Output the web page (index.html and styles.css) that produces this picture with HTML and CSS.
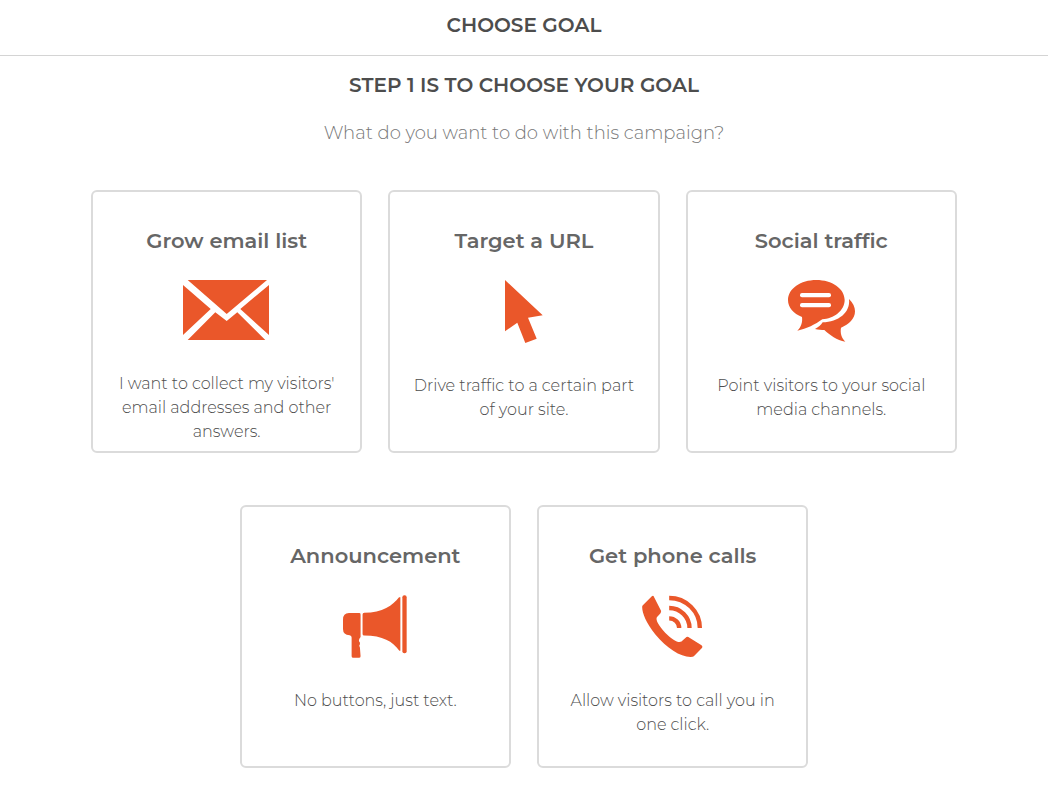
FILE: index.html
```html
<!DOCTYPE html>
<html lang="en">
<head>
    <meta charset="UTF-8">
    <meta name="viewport" content="width=device-width, initial-scale=1.0">
    <title>Choose Goal</title>
    <link rel="stylesheet" href="styles.css">
</head>
<body>
    <header class="top-bar">
        <h1>CHOOSE GOAL</h1>
    </header>

    <main class="content">
        <h2>STEP 1 IS TO CHOOSE YOUR GOAL</h2>
        <p class="question">What do you want to do with this campaign?</p>

        <div class="goals">
            <button type="button" class="goal">
                <span class="goal-title">Grow email list</span>
                <svg class="goal-icon" width="87" height="61" viewBox="0 0 87 61" aria-hidden="true">
                    <path d="M4.7 0H84L43.7 34ZM0 5L27.7 29L0 55ZM86 5L57.3 29L86 55ZM4.7 60L32.3 32.3L43.7 41L54.3 32.3L82.3 60Z"/>
                </svg>
                <span class="goal-text">I want to collect my visitors' email addresses and other answers.</span>
            </button>

            <button type="button" class="goal">
                <span class="goal-title">Target a URL</span>
                <svg class="goal-icon" width="38" height="63" viewBox="0 0 38 63" aria-hidden="true">
                    <path d="M0 0L37.7 35.3L23 37.7L31.7 58.7L20.3 63L12.3 42.7L0 51.3Z"/>
                </svg>
                <span class="goal-text">Drive traffic to a certain part of your site.</span>
            </button>

            <button type="button" class="goal">
                <span class="goal-title">Social traffic</span>
                <svg class="goal-icon" width="67" height="63" viewBox="39 30 201 189" aria-hidden="true">
                    <path d="M124 30C171 30 209 56 209 90C209 122 176 146 142 148C121 163 95 177 67 182C79 172 83 155 81 141C55 131 39 112 39 90C39 56 77 30 124 30Z"/>
                    <path d="M222 87C234 98 240 112 240 124C240 146 222 164 198 173C195 190 200 204 211 215C185 210 165 196 148 180C140 180 130 179 120 177C130 172 138 165 143 157C190 156 227 128 222 87Z"/>
                    <rect class="cutout" x="75" y="69" width="93" height="13" rx="6"/>
                    <rect class="cutout" x="75" y="99" width="93" height="13" rx="6"/>
                </svg>
                <span class="goal-text">Point visitors to your social media channels.</span>
            </button>

            <button type="button" class="goal">
                <span class="goal-title">Announcement</span>
                <svg class="goal-icon" width="64" height="63" viewBox="40 30 193 189" aria-hidden="true">
                    <path d="M58 84H89Q93 84 93 88V156Q87 163 88 168Q93 173 91 178Q87 182 91 188L93 214Q93 219 88 219H71Q66 219 66 214V158Q66 152 60 151Q40 150 40 132V104Q40 84 58 84Z"/>
                    <path d="M104 83C160 83 190 60 209 36H213V198H210C190 170 160 152 104 152Q99 152 99 147V88Q99 83 104 83Z"/>
                    <rect x="219" y="30" width="13" height="175" rx="6"/>
                </svg>
                <span class="goal-text">No buttons, just text.</span>
            </button>

            <button type="button" class="goal">
                <span class="goal-title">Get phone calls</span>
                <svg class="goal-icon" width="61" height="63" viewBox="36 30 182 189" aria-hidden="true">
                    <path d="M70 33L93 78Q93 84 87 89L80 97C76 105 85 122 105 143C125 162 138 171 148 171Q155 171 158 166L169 156Q173 154 178 158L214 181Q218 184 216 188L191 214Q189 216 181 216C150 216 110 190 75 148C48 113 36 85 36 66Q36 63 38 61L65 34Q68 31 70 33Z"/>
                    <path class="wave" d="M117 39A92 90 0 0 1 209 129M117 69A61 60 0 0 1 178 129M117 100A30 29 0 0 1 147 129"/>
                </svg>
                <span class="goal-text">Allow visitors to call you in one click.</span>
            </button>
        </div>
    </main>
</body>
</html>
```
FILE: styles.css
```css
* {
    box-sizing: border-box;
}

body {
    margin: 0;
    background-color: #fff;
    color: #4d4d4d;
    font-family: Montserrat, Inter, sans-serif;
    font-weight: 300;
    text-align: center;
}

h1, h2 {
    margin: 0;
    font-size: 20px;
    line-height: 24px;
    font-weight: 600;
}

.top-bar {
    padding: 13px 20px 18px;
    border-bottom: 1px solid #d4d4d4;
}

.content {
    max-width: 906px;
    margin: 0 auto;
    padding: 17px 20px 26px;
}

.question {
    margin: 24px 0 45px;
    font-size: 18px;
    line-height: 24px;
    color: #777;
}

.goals {
    display: flex;
    flex-wrap: wrap;
    justify-content: center;
    gap: 52px 26px;
}

.goal {
    display: flex;
    flex-direction: column;
    align-items: center;
    width: calc((100% - 52px) / 3);
    min-width: 240px;
    min-height: 263px;
    padding: 36px 20px 7px;
    border: 2px solid #dbdbdb;
    border-radius: 6px;
    background-color: #fff;
    color: #666;
    font-family: inherit;
    font-weight: inherit;
    cursor: pointer;
}

.goal:hover {
    border-color: #ea572a;
}

.goal-title {
    font-size: 21px;
    line-height: 26px;
    font-weight: 600;
}

.goal-icon {
    margin: 26px 0 31px;
    fill: #ea572a;
}

.goal-icon .cutout {
    fill: #fff;
}

.goal-icon .wave {
    fill: none;
    stroke: #ea572a;
    stroke-width: 13;
}

.goal-text {
    font-size: 16px;
    line-height: 24px;
    color: #4d4d4d;
}
```
